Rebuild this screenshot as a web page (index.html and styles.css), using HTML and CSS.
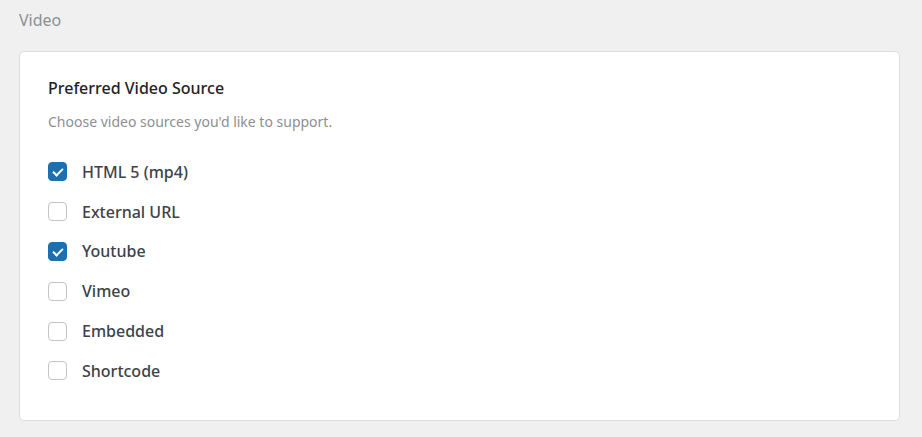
FILE: index.html
```html
<!DOCTYPE html>
<html lang="en">
<head>
    <meta charset="UTF-8">
    <meta name="viewport" content="width=device-width, initial-scale=1.0">
    <title>Video</title>
    <link rel="stylesheet" href="styles.css">
</head>
<body>
    <div class="section">
        <div class="section-title">Video</div>
        <div class="card">
            <h3>Preferred Video Source</h3>
            <p class="desc">Choose video sources you'd like to support.</p>
            <div class="options">
                <label class="option"><input type="checkbox" checked><span class="box"></span>HTML 5 (mp4)</label>
                <label class="option"><input type="checkbox"><span class="box"></span>External URL</label>
                <label class="option"><input type="checkbox" checked><span class="box"></span>Youtube</label>
                <label class="option"><input type="checkbox"><span class="box"></span>Vimeo</label>
                <label class="option"><input type="checkbox"><span class="box"></span>Embedded</label>
                <label class="option"><input type="checkbox"><span class="box"></span>Shortcode</label>
            </div>
        </div>
    </div>
</body>
</html>
```

FILE: styles.css
```css
html, body {
    margin: 0;
    padding: 0;
}
body {
    font-family: "Noto Sans", "Open Sans", Arial, sans-serif;
    background: #f0f0f1;
    color: #1d2327;
}
.section {
    padding: 7px 22px 0 19px;
}
.section-title {
    font-size: 16px;
    color: #8c8f94;
    line-height: 26px;
    margin-bottom: 18px;
}
.card {
    background: #fff;
    border: 1px solid #dcdcde;
    border-radius: 5px;
    padding: 25px 28px 30px;
    height: 313px;
}
h3 {
    margin: 0;
    font-size: 16px;
    font-weight: 500;
    line-height: 22px;
    color: #1d2327;
}
.desc {
    margin: 13px 0 20px;
    font-size: 14px;
    color: #8c8f94;
    line-height: 20px;
}
.options {
    display: flex;
    flex-direction: column;
}
.option {
    display: flex;
    align-items: center;
    height: 39.8px;
    font-size: 16px;
    font-weight: 500;
    color: #3c434a;
    cursor: pointer;
}
.option input {
    display: none;
}
.box {
    width: 19px;
    height: 19px;
    box-sizing: border-box;
    border: 1px solid #c3c4c7;
    border-radius: 4px;
    margin-right: 15px;
    position: relative;
}
.option input:checked + .box {
    background: #1d6fae;
    border-color: #1d6fae;
}
.option input:checked + .box::after {
    content: "";
    position: absolute;
    left: 6px;
    top: 3px;
    width: 4px;
    height: 8px;
    border: solid #fff;
    border-width: 0 2px 2px 0;
    transform: rotate(45deg);
}
```
